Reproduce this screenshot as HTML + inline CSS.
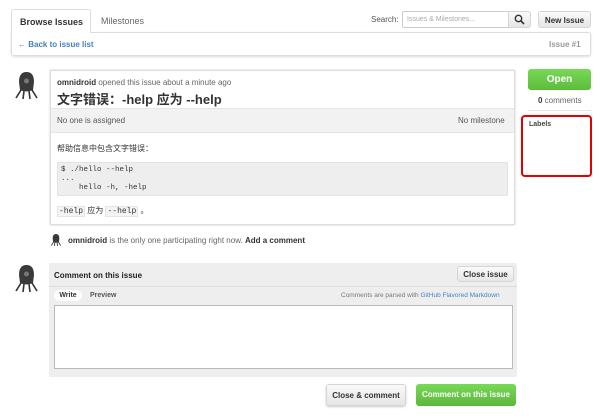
<!DOCTYPE html><html><head><meta charset="utf-8"><style>
*{box-sizing:border-box;margin:0;padding:0}
body{width:600px;height:420px;background:#fff;font-family:"Liberation Sans","Noto Sans CJK SC",sans-serif;font-size:9px;color:#333;position:relative;overflow:hidden}
.a{position:absolute}
.btn{position:absolute;border:1px solid #d5d5d5;border-radius:3px;background:linear-gradient(#fafafa,#e6e6e6);font-weight:bold;font-size:8px;text-align:center;color:#333}
.mono{font-family:"Liberation Mono",monospace}
</style></head><body>
<div class="a" style="left:11px;top:9px;width:80px;height:24px;border:1px solid #ddd;border-bottom:none;border-radius:3px 3px 0 0;background:#fff;z-index:2;font-weight:bold;font-size:9px;padding:7px 0 0 8px">Browse Issues</div>
<div class="a" style="left:101px;top:16px;font-size:9px;color:#666">Milestones</div>
<div class="a" style="left:371px;top:15px;font-size:8px;color:#555">Search:</div>
<div class="a" style="left:402px;top:11px;width:107px;height:17px;border:1px solid #ccc;border-radius:2px 0 0 2px;font-size:7px;color:#aaa;padding:4px 4px">Issues &amp; Milestones...</div>
<div class="btn" style="left:508px;top:11px;width:23px;height:17px;border-radius:0 3px 3px 0">
<svg width="11" height="11" viewBox="0 0 11 11" style="margin-top:2px"><circle cx="4.5" cy="4.5" r="3.2" fill="none" stroke="#333" stroke-width="1.4"/><path d="M7 7l3 3" stroke="#333" stroke-width="1.6"/></svg></div>
<div class="btn" style="left:538px;top:11px;width:53px;height:17px;padding-top:4px">New Issue</div>
<div class="a" style="left:11px;top:32px;width:580px;height:24px;border:1px solid #ddd;border-radius:0 3px 3px 3px;box-shadow:0 1px 2px #ddd"></div>
<div class="a" style="left:18px;top:40px;font-size:8px;font-weight:bold;color:#4183c4">← Back to issue list</div>
<div class="a" style="left:549px;top:40px;font-size:8px;font-weight:bold;color:#999">Issue #1</div>
<svg class="a" style="left:13px;top:70px" width="27" height="31" viewBox="0 0 27 31"><path d="M6 12 Q6 2 13.5 2 Q21 2 21 12 L20 20 Q13.5 23 7 20Z" fill="#3a3a3a"/><circle cx="13.5" cy="11" r="2.5" fill="#777"/><path d="M8 20 L3 28 M11 21 L10 29 M16 21 L17 29 M19 20 L24 28" stroke="#333" stroke-width="1.6" fill="none"/></svg>
<div class="a" style="left:50px;top:70px;width:465px;height:155px;border:1px solid #ddd;box-shadow:0 0 2px #ccc;background:#fff"></div>
<div class="a" style="left:57px;top:78px;font-size:8px;color:#666"><b style="color:#333">omnidroid</b> opened this issue about a minute ago</div>
<div class="a" style="left:57px;top:89px;font-size:13px;font-weight:bold;color:#333">文字错误：-help 应为 --help</div>
<div class="a" style="left:51px;top:108px;width:463px;height:25px;background:#f2f2f2;border-top:1px solid #e5e5e5;border-bottom:1px solid #e5e5e5"></div>
<div class="a" style="left:57px;top:116px;font-size:8px;color:#555">No one is assigned</div>
<div class="a" style="left:458px;top:116px;font-size:8px;color:#555">No milestone</div>
<div class="a" style="left:57px;top:143px;font-size:8px">帮助信息中包含文字错误：</div>
<div class="a mono" style="left:57px;top:162px;width:451px;height:34px;background:#eee;border:1px solid #e2e2e2;border-radius:2px;font-size:7.5px;line-height:9px;padding:3px 3px;white-space:pre">$ ./hello --help
...
    hello -h, -help</div>
<div class="a" style="left:57px;top:205px;font-size:8px"><span class="mono" style="background:#f4f4f4;border:1px solid #e5e5e5;padding:0 1px">-help</span> 应为 <span class="mono" style="background:#f4f4f4;border:1px solid #e5e5e5;padding:0 1px">--help</span> 。</div>
<div class="a" style="left:528px;top:69px;width:63px;height:21px;border-radius:3px;background:linear-gradient(#79d858,#5cbc3c);color:#fff;font-weight:bold;font-size:10px;text-align:center;padding-top:5px">Open</div>
<div class="a" style="left:538px;top:96px;font-size:8px;color:#666"><b style="color:#333">0</b> comments</div>
<div class="a" style="left:528px;top:110px;width:63px;height:1px;background:#e5e5e5"></div>
<div class="a" style="left:521px;top:115px;width:71px;height:62px;border:2px solid #e30000;border-radius:4px"></div>
<div class="a" style="left:529px;top:121px;font-size:7px;font-weight:bold;color:#444">Labels</div>
<svg class="a" style="left:50px;top:233px" width="12" height="14" viewBox="0 0 27 31"><path d="M6 12 Q6 2 13.5 2 Q21 2 21 12 L20 20 Q13.5 23 7 20Z" fill="#3a3a3a"/><path d="M8 20 L3 28 M11 21 L10 29 M16 21 L17 29 M19 20 L24 28" stroke="#333" stroke-width="2" fill="none"/></svg>
<div class="a" style="left:68px;top:236px;font-size:8px;color:#666"><b style="color:#333">omnidroid</b> is the only one participating right now. <b style="color:#333">Add a comment</b></div>
<svg class="a" style="left:13px;top:263px" width="27" height="31" viewBox="0 0 27 31"><path d="M6 12 Q6 2 13.5 2 Q21 2 21 12 L20 20 Q13.5 23 7 20Z" fill="#3a3a3a"/><circle cx="13.5" cy="11" r="2.5" fill="#777"/><path d="M8 20 L3 28 M11 21 L10 29 M16 21 L17 29 M19 20 L24 28" stroke="#333" stroke-width="1.6" fill="none"/></svg>
<div class="a" style="left:49px;top:263px;width:468px;height:114px;background:#eee;border-radius:2px"></div>
<div class="a" style="left:49px;top:286px;width:468px;height:1px;background:#ddd"></div>
<div class="a" style="left:54px;top:271px;font-size:8px;font-weight:bold;color:#222">Comment on this issue</div>
<div class="btn" style="left:457px;top:266px;width:57px;height:16px;padding-top:3px">Close issue</div>
<div class="a" style="left:54px;top:290px;width:28px;height:11px;background:#fff;border-radius:6px;font-size:7px;font-weight:bold;text-align:center;padding-top:2px">Write</div>
<div class="a" style="left:90px;top:292px;font-size:7px;color:#555;font-weight:bold">Preview</div>
<div class="a" style="left:341px;top:292px;font-size:6.5px;color:#777">Comments are parsed with <span style="color:#4183c4">GitHub Flavored Markdown</span></div>
<div class="a" style="left:54px;top:305px;width:459px;height:64px;background:#fff;border:1px solid #bbb"></div>
<div class="btn" style="left:326px;top:384px;width:80px;height:22px;padding-top:6px;box-shadow:0 1px 2px #ccc">Close &amp; comment</div>
<div class="a" style="left:416px;top:384px;width:100px;height:22px;border-radius:3px;background:linear-gradient(#79d858,#5cb83c);color:#fff;font-weight:bold;font-size:8px;text-align:center;padding-top:6px">Comment on this issue</div>
</body></html>
